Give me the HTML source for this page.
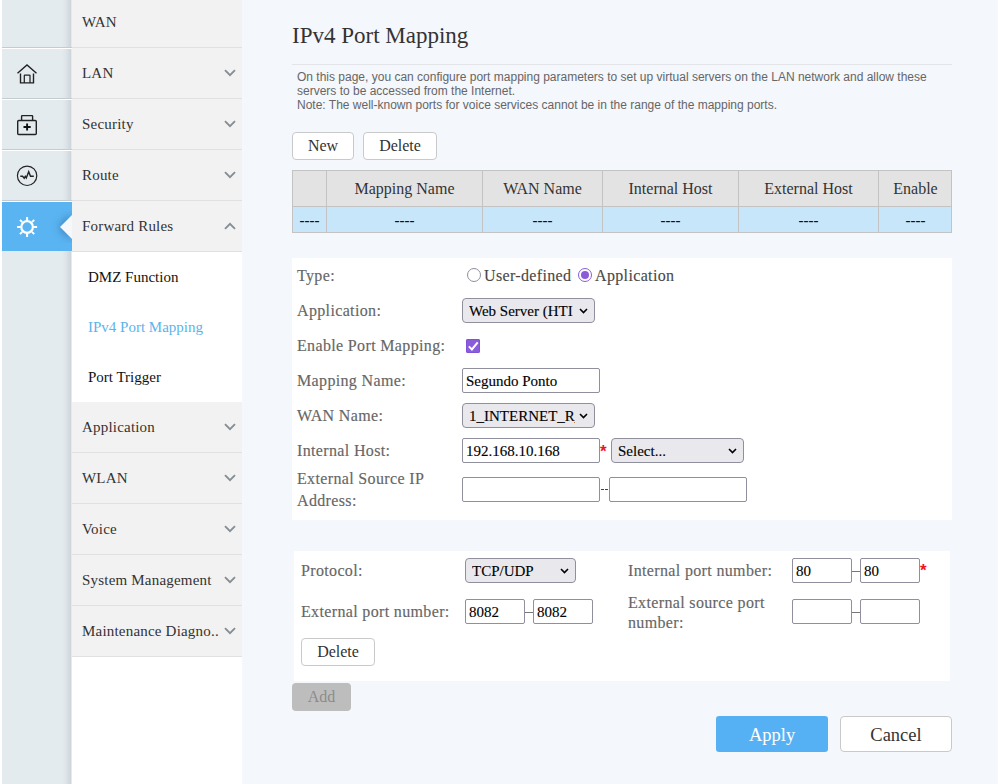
<!DOCTYPE html>
<html><head><meta charset="utf-8">
<style>
*{box-sizing:border-box}
html,body{margin:0;padding:0}
body{width:998px;height:784px;overflow:hidden;position:relative;background:#f4f7fb;font-family:"Liberation Serif",serif}
.abs{position:absolute}
#strip{left:0;top:0;width:2px;height:784px;background:#fff}
#icons{left:2px;top:0;width:70px;height:784px;background:#e4ebef}
#icons .shade{position:absolute;right:1px;top:0;width:9px;height:784px;background:linear-gradient(to right,rgba(140,150,158,0),rgba(140,150,158,0.08) 45%,rgba(140,150,158,0.26))}
#icons .edge{position:absolute;right:0;top:0;width:1px;height:784px;background:rgba(232,233,235,0.85)}
.isep{position:absolute;left:0;width:70px;height:1px;background:#c6cbcf}
.iwhite{position:absolute;left:0;width:70px;height:1px;background:#fff}
#active{left:2px;top:202px;width:70px;height:49px;background:#5ab4f2}
#menu{left:72px;top:0;width:170px;height:784px;background:#fff}
.mi{position:absolute;left:0;width:170px;background:#f2f2f2;border-bottom:1px solid #e1e1e1}
.mi span{position:absolute;left:10px;font-size:15px;color:#333;white-space:nowrap;letter-spacing:0.2px}
.chev{position:absolute;left:152px;width:12px;height:8px}
.sub{position:absolute;left:16px;font-size:15px;color:#111;white-space:nowrap}
.lbl{position:absolute;font-size:16px;color:#666;white-space:nowrap;letter-spacing:0.35px;-webkit-text-stroke:0.15px #666}
.desc{left:297px;top:70px;font-family:"Liberation Sans",sans-serif;font-size:12px;line-height:14px;color:#666;white-space:nowrap}
.btn{position:absolute;background:#fff;border:1px solid #c9c9c9;border-radius:4px;font-size:16px;color:#333;text-align:center}
.inp{position:absolute;background:#fff;border:1px solid #8f8f9d;border-radius:2px;font-size:15px;color:#000;white-space:nowrap;overflow:hidden}
.sel{position:absolute;background:#e9e9ed;border:1px solid #8f8f9d;border-radius:4px;font-size:15px;color:#000;white-space:nowrap;overflow:hidden}
.panel{position:absolute;background:#fff}
.vl{top:171px;width:1px;height:62px;background:#c3c3c3}
.th{position:absolute;top:171px;height:35px;line-height:35px;font-size:16px;color:#333;text-align:center;white-space:nowrap}
.td{position:absolute;top:208px;height:25px;line-height:25px;font-size:15px;color:#111;text-align:center;font-weight:bold}
.radio{position:absolute;width:14px;height:14px;border-radius:50%;border:1px solid #8f8f9d;background:#fff}
.radio.on{border:1px solid #8a5bd9;}
.radio.on::after{content:"";position:absolute;left:2px;top:2px;width:8px;height:8px;border-radius:50%;background:#8a5bd9}
.cb{position:absolute;width:14px;height:14px;border-radius:2px;background:#8a5cdb;box-shadow:inset 0 0 0 1px #7f52d8}
.cb svg{position:absolute;left:0;top:0}
.st{position:absolute;left:6px;top:4px;color:#000;-webkit-text-stroke:0.12px #000;width:calc(100% - 25px);overflow:hidden;white-space:nowrap}
.it{position:absolute;left:3px;top:4px;color:#000;-webkit-text-stroke:0.12px #000}
.sc{position:absolute;right:6px;top:9px}
.ast{position:absolute;font-size:17px;font-weight:bold;color:#f0141e;margin-top:0px;font-family:"Liberation Sans",sans-serif}

</style></head><body>
<div class="abs" id="strip"></div>
<div class="abs" id="icons">
  <div class="shade"></div><div class="edge"></div>
  <div class="isep" style="top:47px"></div><div class="iwhite" style="top:48px"></div>
  <div class="isep" style="top:98px"></div><div class="iwhite" style="top:99px"></div>
  <div class="isep" style="top:149px"></div><div class="iwhite" style="top:150px"></div>
  <div class="isep" style="top:200px"></div><div class="iwhite" style="top:201px"></div>
</div>
<div class="abs" id="active"></div>


<svg class="abs" style="left:0;top:0" width="72" height="260" viewBox="0 0 72 260">
  <g fill="none" stroke="#222" stroke-width="1.4">
    <path d="M17.5 73.2L27 64.9L36.5 73.2"/>
    <path d="M20.5 73.4V82.9H33.5V73.4"/>
    <path d="M24.3 82.9V75.6Q24.3 75 24.9 75H29.4Q30 75 30 75.6V82.9" stroke-width="1.25"/>
    <rect x="17.7" y="120.5" width="18.6" height="14" rx="1"/>
    <path d="M21.6 120.5V116.2Q21.6 115.6 22.2 115.6H32Q32.6 115.6 32.6 116.2V120.5"/>
    <circle cx="27.1" cy="175.8" r="9.7" stroke-width="1.2"/>
  </g>
  <path d="M23.5 127H30.7M27.1 123.4V130.6" fill="none" stroke="#111" stroke-width="1.9"/>
  <path d="M20.3 176.3H22.6L24.2 178.2L25.3 176.3L26.3 178L28.7 171.7L30.5 176.3H33.8" fill="none" stroke="#222" stroke-width="1.4" stroke-linejoin="miter"/>
  <g fill="none" stroke="#fff" stroke-width="2.2">
    <circle cx="27.1" cy="227" r="5.8"/>
  </g>
  <g stroke="#fff" stroke-width="2">
    <path d="M27.1 217V220.6M27.1 233.4V237M17.1 227H20.7M33.5 227H37.1"/>
    <path d="M20 219.9L22.2 222.1M32 231.9L34.2 234.1M20 234.1L22.2 231.9M32 222.1L34.2 219.9"/>
  </g>
</svg>
<div class="abs" style="left:40px;top:211px;width:32px;height:32px;overflow:hidden">
  <div style="position:absolute;left:20px;top:4px;width:0;height:0;border-top:12px solid transparent;border-bottom:12px solid transparent;border-right:12px solid #f4f7fb;filter:drop-shadow(0 0 5px rgba(10,50,90,0.55))"></div>
</div>

<div class="abs" id="menu">
  <div class="mi" style="top:0;height:48px"><span style="top:14px">WAN</span></div>
  <div class="mi" style="top:48px;height:51px"><span style="top:17px">LAN</span><svg class="chev" style="top:21px" width="12" height="8" viewBox="0 0 12 8"><path d="M1 1.2L6 6.2L11 1.2" fill="none" stroke="#858e95" stroke-width="1.9"/></svg></div>
  <div class="mi" style="top:99px;height:51px"><span style="top:17px">Security</span><svg class="chev" style="top:21px" width="12" height="8" viewBox="0 0 12 8"><path d="M1 1.2L6 6.2L11 1.2" fill="none" stroke="#858e95" stroke-width="1.9"/></svg></div>
  <div class="mi" style="top:150px;height:51px"><span style="top:17px">Route</span><svg class="chev" style="top:21px" width="12" height="8" viewBox="0 0 12 8"><path d="M1 1.2L6 6.2L11 1.2" fill="none" stroke="#858e95" stroke-width="1.9"/></svg></div>
  <div class="mi" style="top:201px;height:51px"><span style="top:17px">Forward Rules</span><svg class="chev" style="top:21px" width="12" height="8" viewBox="0 0 12 8"><path d="M1 6.8L6 1.8L11 6.8" fill="none" stroke="#858e95" stroke-width="1.9"/></svg></div>
  <div class="sub" style="top:269px">DMZ Function</div>
  <div class="sub" style="top:319px;color:#5bb4ec">IPv4 Port Mapping</div>
  <div class="sub" style="top:369px">Port Trigger</div>
  <div class="mi" style="top:402px;height:51px"><span style="top:17px">Application</span><svg class="chev" style="top:21px" width="12" height="8" viewBox="0 0 12 8"><path d="M1 1.2L6 6.2L11 1.2" fill="none" stroke="#858e95" stroke-width="1.9"/></svg></div>
  <div class="mi" style="top:453px;height:51px"><span style="top:17px">WLAN</span><svg class="chev" style="top:21px" width="12" height="8" viewBox="0 0 12 8"><path d="M1 1.2L6 6.2L11 1.2" fill="none" stroke="#858e95" stroke-width="1.9"/></svg></div>
  <div class="mi" style="top:504px;height:51px"><span style="top:17px">Voice</span><svg class="chev" style="top:21px" width="12" height="8" viewBox="0 0 12 8"><path d="M1 1.2L6 6.2L11 1.2" fill="none" stroke="#858e95" stroke-width="1.9"/></svg></div>
  <div class="mi" style="top:555px;height:51px"><span style="top:17px">System Management</span><svg class="chev" style="top:21px" width="12" height="8" viewBox="0 0 12 8"><path d="M1 1.2L6 6.2L11 1.2" fill="none" stroke="#858e95" stroke-width="1.9"/></svg></div>
  <div class="mi" style="top:606px;height:51px"><span style="top:17px">Maintenance Diagno..</span><svg class="chev" style="top:21px" width="12" height="8" viewBox="0 0 12 8"><path d="M1 1.2L6 6.2L11 1.2" fill="none" stroke="#858e95" stroke-width="1.9"/></svg></div>
</div>

<div class="abs" style="left:292px;top:23px;font-size:23px;color:#333;white-space:nowrap">IPv4 Port Mapping</div>
<div class="abs" style="left:292px;top:64px;width:660px;height:1px;background:#e2e4e8"></div>
<div class="abs desc">On this page, you can configure port mapping parameters to set up virtual servers on the LAN network and allow these<br>servers to be accessed from the Internet.<br>Note: The well-known ports for voice services cannot be in the range of the mapping ports.</div>

<div class="btn" style="left:292px;top:132px;width:62px;height:28px;line-height:26px">New</div>
<div class="btn" style="left:363px;top:132px;width:74px;height:28px;line-height:26px">Delete</div>


<!-- table -->
<div class="abs" style="left:292px;top:170px;width:660px;height:63px;background:#c8e6fa;border:1px solid #c3c3c3"></div>
<div class="abs" style="left:293px;top:171px;width:658px;height:36px;background:#e3e3e3;border-bottom:1px solid #c3c3c3"></div>
<div class="abs vl" style="left:326px"></div>
<div class="abs vl" style="left:482px"></div>
<div class="abs vl" style="left:602px"></div>
<div class="abs vl" style="left:738px"></div>
<div class="abs vl" style="left:878px"></div>
<div class="th" style="left:327px;width:155px">Mapping Name</div>
<div class="th" style="left:483px;width:119px">WAN Name</div>
<div class="th" style="left:603px;width:135px">Internal Host</div>
<div class="th" style="left:739px;width:139px">External Host</div>
<div class="th" style="left:879px;width:73px">Enable</div>
<div class="td" style="left:293px;width:33px">----</div>
<div class="td" style="left:327px;width:155px">----</div>
<div class="td" style="left:483px;width:119px">----</div>
<div class="td" style="left:603px;width:135px">----</div>
<div class="td" style="left:739px;width:139px">----</div>
<div class="td" style="left:879px;width:73px">----</div>

<!-- panel 1 -->
<div class="panel" style="left:292px;top:258px;width:660px;height:262px"></div>
<div class="lbl" style="left:297px;top:267px">Type:</div>
<div class="lbl" style="left:297px;top:302px">Application:</div>
<div class="lbl" style="left:297px;top:337px">Enable Port Mapping:</div>
<div class="lbl" style="left:297px;top:372px">Mapping Name:</div>
<div class="lbl" style="left:297px;top:407px">WAN Name:</div>
<div class="lbl" style="left:297px;top:442px">Internal Host:</div>
<div class="lbl" style="left:297px;top:468px;line-height:22px">External Source IP<br>Address:</div>

<div class="radio" style="left:467px;top:268px"></div>
<div class="lbl" style="left:484px;top:267px;color:#444">User-defined</div>
<div class="radio on" style="left:578px;top:268px"></div>
<div class="lbl" style="left:595px;top:267px;color:#444">Application</div>

<div class="sel" style="left:462px;top:298px;width:133px;height:25px"><span class="st">Web Server (HTI</span><svg class="sc" width="9" height="6" viewBox="0 0 9 6"><path d="M1 1l3.5 3.5L8 1" fill="none" stroke="#000" stroke-width="1.6"/></svg></div>
<div class="cb" style="left:466px;top:339px"><svg width="14" height="14" viewBox="0 0 14 14"><path d="M2.9 7.4L5.9 10.4L11.7 3.4" fill="none" stroke="#fff" stroke-width="2"/></svg></div>
<div class="inp" style="left:462px;top:368px;width:138px;height:25px"><span class="it">Segundo Ponto</span></div>
<div class="sel" style="left:462px;top:403px;width:133px;height:25px"><span class="st">1_INTERNET_R_\</span><svg class="sc" width="9" height="6" viewBox="0 0 9 6"><path d="M1 1l3.5 3.5L8 1" fill="none" stroke="#000" stroke-width="1.6"/></svg></div>
<div class="inp" style="left:462px;top:438px;width:138px;height:25px"><span class="it">192.168.10.168</span></div>
<div class="ast" style="left:600px;top:442px">*</div>
<div class="sel" style="left:611px;top:438px;width:133px;height:25px"><span class="st">Select...</span><svg class="sc" width="9" height="6" viewBox="0 0 9 6"><path d="M1 1l3.5 3.5L8 1" fill="none" stroke="#000" stroke-width="1.6"/></svg></div>
<div class="inp" style="left:462px;top:477px;width:138px;height:25px"></div>
<div class="abs" style="left:601px;top:489px;width:3px;height:1px;background:#444"></div><div class="abs" style="left:605px;top:489px;width:3px;height:1px;background:#444"></div>
<div class="inp" style="left:609px;top:477px;width:138px;height:25px"></div>

<!-- panel 2 -->
<div class="panel" style="left:294px;top:551px;width:656px;height:130px"></div>
<div class="lbl" style="left:301px;top:562px">Protocol:</div>
<div class="lbl" style="left:301px;top:603px">External port number:</div>
<div class="sel" style="left:465px;top:558px;width:111px;height:25px"><span class="st">TCP/UDP</span><svg class="sc" width="9" height="6" viewBox="0 0 9 6"><path d="M1 1l3.5 3.5L8 1" fill="none" stroke="#000" stroke-width="1.6"/></svg></div>
<div class="inp" style="left:465px;top:599px;width:60px;height:25px"><span class="it">8082</span></div>
<div class="abs" style="left:525px;top:612px;width:8px;height:1px;background:#777"></div>
<div class="inp" style="left:533px;top:599px;width:60px;height:25px"><span class="it">8082</span></div>
<div class="btn" style="left:301px;top:638px;width:74px;height:28px;line-height:26px">Delete</div>

<div class="lbl" style="left:628px;top:562px">Internal port number:</div>
<div class="lbl" style="left:628px;top:593px;line-height:20px">External source port<br>number:</div>
<div class="inp" style="left:792px;top:558px;width:60px;height:25px"><span class="it">80</span></div>
<div class="abs" style="left:852px;top:571px;width:8px;height:1px;background:#777"></div>
<div class="inp" style="left:860px;top:558px;width:60px;height:25px"><span class="it">80</span></div>
<div class="ast" style="left:920px;top:561px">*</div>
<div class="inp" style="left:792px;top:599px;width:60px;height:25px"></div>
<div class="abs" style="left:852px;top:612px;width:8px;height:1px;background:#777"></div>
<div class="inp" style="left:860px;top:599px;width:60px;height:25px"></div>

<div class="abs" style="left:292px;top:683px;width:59px;height:28px;background:#bdbdbd;border-radius:4px;font-size:16px;color:#8c8c8c;text-align:center;line-height:28px">Add</div>

<div class="abs" style="left:716px;top:716px;width:112px;height:36px;background:#56b1f4;border-radius:3px;font-size:18.5px;color:#fff;text-align:center;line-height:38px">Apply</div>
<div class="btn" style="left:840px;top:716px;width:112px;height:36px;line-height:36px;font-size:18.5px">Cancel</div>

</body></html>
